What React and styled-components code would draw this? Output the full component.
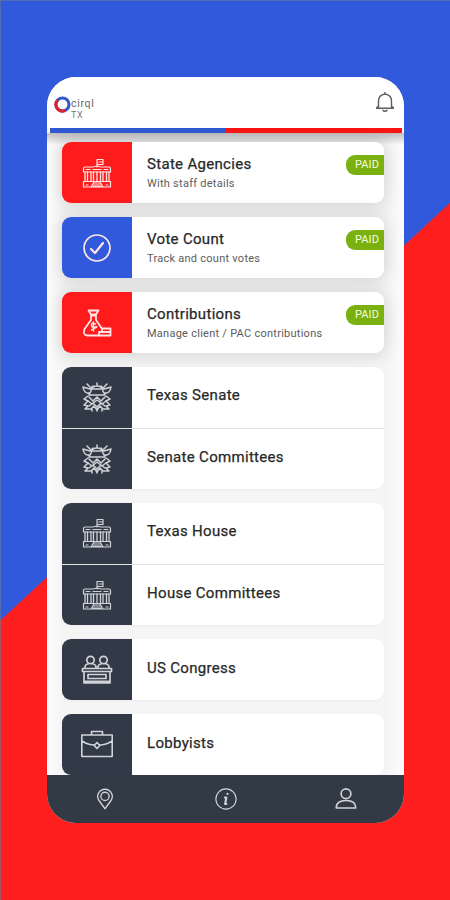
import styled, { createGlobalStyle } from "styled-components";

const GlobalStyle = createGlobalStyle`
  * {
    box-sizing: border-box;
  }

  body {
    margin: 0;
    font-family: Roboto, "Liberation Sans", sans-serif;
  }
`;

const Backdrop = styled.div`
  width: 450px;
  height: 900px;
  padding: 77px 46px 0 47px;
  overflow: hidden;
  background:
    linear-gradient(to bottom right, #3159db 50%, #ff1e1e 50.2%) 0 202px / 450px
      418px no-repeat,
    linear-gradient(#3159db 400px, #ff1e1e 400px);
  box-shadow: inset 1px 1px 0 rgba(110, 120, 150, 0.6);
`;

const Phone = styled.div`
  display: flex;
  flex-direction: column;
  height: 746px;
  border-radius: 29px;
  overflow: hidden;
  background: #f8f8f8;
`;

const Header = styled.header`
  flex: none;
  display: flex;
  justify-content: space-between;
  height: 51px;
  padding: 14px 9px 0 7px;
  background: white;
`;

const Logo = styled.div`
  display: flex;
  padding-top: 5px;
`;

const LogoText = styled.div`
  padding-top: 3px;
  font-size: 10.5px;
  line-height: 10px;
  letter-spacing: 0.7px;
  color: #666;

  span {
    display: block;
    font-size: 9px;
    line-height: 12px;
    color: #777;
  }
`;

const Stripe = styled.div`
  flex: none;
  height: 5px;
  margin: 0 2px 0 3px;
  background: linear-gradient(90deg, #3159cf 176px, #f91414 176px);
`;

const List = styled.main`
  flex: 1;
  min-height: 0;
  overflow: hidden;
  display: flex;
  flex-direction: column;
  gap: 14px;
  padding: 9px 20px 0 15px;
  background:
    linear-gradient(rgba(0, 0, 0, 0.24), rgba(0, 0, 0, 0) 12px),
    linear-gradient(90deg, #fdfdfd, #f5f5f5 15px 340px, #fcfcfc);
`;

const Card = styled.section`
  flex: none;
  border-radius: 9px;
  box-shadow: ${({ $raised }) =>
    $raised
      ? "0 1px 17px 2px rgba(0, 0, 0, 0.13)"
      : "0 1px 3px rgba(0, 0, 0, 0.04)"};
`;

const CardRows = styled.div`
  display: flex;
  flex-direction: column;
  height: ${({ $count }) => $count * 61}px;
  border-radius: 9px;
  overflow: hidden;
  background: white;
`;

const Row = styled.div`
  flex: 1;
  display: flex;

  & + & {
    border-top: 1px solid #e4e4e4;
  }
`;

const IconBox = styled.div`
  width: 70px;
  display: flex;
  align-items: center;
  justify-content: center;
  color: ${({ $color }) => ($color === "#323a47" ? "#d0d3d8" : "#ffe5e5")};
  background: ${({ $color }) => $color};
`;

const Labels = styled.div`
  flex: 1;
  padding: ${({ $single, $alone }) =>
      $single ? ($alone ? "20px" : "19px") : "13px"}
    0 0 15px;
  white-space: nowrap;
`;

const Title = styled.div`
  font-size: 15px;
  line-height: 18px;
  letter-spacing: 0.31px;
  color: #282828;
  -webkit-text-stroke: 0.25px #282828;
`;

const Subtitle = styled.div`
  margin-top: 4px;
  font-size: 11px;
  line-height: 14px;
  letter-spacing: 0.26px;
  color: #5c5c5c;
`;

const Badge = styled.div`
  align-self: flex-start;
  width: 38px;
  height: 20px;
  margin-top: 13px;
  padding-left: 9px;
  border-radius: 9px 0 0 9px;
  font-size: 11px;
  line-height: 20px;
  letter-spacing: 0.1px;
  color: #f3ffe0;
  background: #7ab00f;
`;

const TabBar = styled.nav`
  flex: none;
  display: flex;
  align-items: center;
  justify-content: space-between;
  height: 48px;
  padding: 0 46px 0 46px;
  color: #cfd2d7;
  background: #323a45;
`;

const Icon = ({ size = 32, width = 1.5, children }) => (
  <svg
    width={size}
    height={size}
    viewBox="0 0 32 32"
    fill="none"
    stroke="currentColor"
    strokeWidth={width}
    strokeLinecap="round"
    strokeLinejoin="round"
  >
    {children}
  </svg>
);

const BuildingIcon = () => (
  <Icon width={1.2}>
    <path d="M16 10V2.500h6v5h-6M18 5h4" />
    <path d="M2.500 11.500q0-1.500 1.500-1.500h8l4-1 4 1h8q1.500 0 1.500 1.500V15h-27zM5 12.500h4M12 12.500h8M23 12.500h4" />
    <path
      d="M4 15v9M6.500 15v9M10 15v9M12.500 15v9M16 15v9M19.500 15v9M22 15v9M25.500 15v9M28 15v9"
      strokeWidth="1.300"
    />
    <path d="M2.500 24.500h27V30h-27zM10 30l3-5h6l3 5M13 27h6M12 29h8M5 28h2M25 28h2" />
  </Icon>
);

const CheckIcon = () => (
  <Icon width={1.7}>
    <circle cx="16" cy="16" r="13" />
    <path d="m10 17 4 4 8-10" strokeWidth="2.2" />
  </Icon>
);

const MoneyBagIcon = () => (
  <Icon width={1.8}>
    <path d="M7.500 3.500h10L15 7.500h-5zM10 8.500h5M10 9v4L3.500 22q-2 6.500 3 6.500H18M15 9v4l5.500 8" />
    <path d="M12.500 15v9M14.500 17q-4-2-4 1t4 2-4 3" strokeWidth="1.500" />
    <path d="M21 21.500h8.500v7H18V25h3zM21 25h8" />
  </Icon>
);

const CapitolIcon = () => (
  <Icon width={1.5}>
    <path d="M16 2v3M10 10q1-5 6-5t6 5l2 4H8zM9 12q-6 1-7-6l7 2 3-3M23 12q6 1 7-6l-7 2-3-3M6 3l3 3M26 3l-3 3M12 8h8" />
    <path d="M7 15l-4 3 4 2-4 4 4 1-3 3h6l3-3 3 4 3-4 3 3h6l-3-3 4-1-4-4 4-2-4-3" />
    <path d="M8 16l4 4 4-4 4 4 4-4M7 20l4 3 5-4 5 4 4-3M8 25l4-3 4 4 4-4 4 3M11 28v2M16 27v3M21 28v2" />
  </Icon>
);

const CongressIcon = () => (
  <Icon width={1.7}>
    <circle cx="9.500" cy="6" r="3.700" />
    <circle cx="22.500" cy="6" r="3.700" />
    <path d="M4 14v-1q0-2.500 4-3.500M15 14v-1q0-2.500-4-3.500M17 14v-1q0-2.500 4-3.500M28 14v-1q0-2.500-4-3.500M1.500 14.500h29v3h-29zM3 17.500v11.500h26V17.500M7 20.500h18v4H7zM3 27.300h26" />
  </Icon>
);

const BriefcaseIcon = () => (
  <Icon width={1.6}>
    <path d="M.8 6h30.400v21.500H.8zM10.500 6V2.500h11V6M1 12q6 4 12.500 4M18.500 16q6.500 0 12.500-4" />
    <path d="m16 13.500 2.800 3-2.800 3-2.800-3z" />
  </Icon>
);

const icons = {
  building: BuildingIcon,
  check: CheckIcon,
  money: MoneyBagIcon,
  capitol: CapitolIcon,
  congress: CongressIcon,
  briefcase: BriefcaseIcon,
};

const RED = "#ff1b1b";
const BLUE = "#3159db";
const DARK = "#323a47";

const cards = [
  [
    {
      title: "State Agencies",
      subtitle: "With staff details",
      icon: "building",
      color: RED,
      paid: true,
    },
  ],
  [
    {
      title: "Vote Count",
      subtitle: "Track and count votes",
      icon: "check",
      color: BLUE,
      paid: true,
    },
  ],
  [
    {
      title: "Contributions",
      subtitle: "Manage client / PAC contributions",
      icon: "money",
      color: RED,
      paid: true,
    },
  ],
  [
    { title: "Texas Senate", icon: "capitol", color: DARK },
    { title: "Senate Committees", icon: "capitol", color: DARK },
  ],
  [
    { title: "Texas House", icon: "building", color: DARK },
    { title: "House Committees", icon: "building", color: DARK },
  ],
  [{ title: "US Congress", icon: "congress", color: DARK }],
  [{ title: "Lobbyists", icon: "briefcase", color: DARK }],
];

const MenuRow = ({ title, subtitle, icon, color, paid, alone }) => {
  const RowIcon = icons[icon];

  return (
    <Row>
      <IconBox $color={color}>
        <RowIcon />
      </IconBox>
      <Labels $single={!subtitle} $alone={alone}>
        <Title>{title}</Title>
        {subtitle && <Subtitle>{subtitle}</Subtitle>}
      </Labels>
      {paid && <Badge>PAID</Badge>}
    </Row>
  );
};

const App = () => (
  <>
    <GlobalStyle />
    <Backdrop>
      <Phone>
        <Header>
          <Logo>
            <svg width="17" height="17" viewBox="0 0 17 17" fill="none">
              <circle cx="8.500" cy="8.500" r="6.500" stroke="#3159c8" strokeWidth="3" />
              <path
                d="M3.500 4.300A6.500 6.500 0 0 0 11 14.500"
                stroke="#e3202b"
                strokeWidth="3"
              />
            </svg>
            <LogoText>
              cirql<span>TX</span>
            </LogoText>
          </Logo>
          <svg
            width="20"
            height="22"
            viewBox="0 0 20 22"
            fill="none"
            stroke="#5c6066"
            strokeWidth="1.400"
            strokeLinejoin="round"
          >
            <path d="M1 17.300h18M3.500 17V10q0-6 6.500-7 6.500 1 6.500 7v7M10 3V1M7.500 19q2.500 2.500 5 0M1.500 17l2-2M18.500 17l-2-2" />
          </svg>
        </Header>
        <Stripe />
        <List>
          {cards.map((rows) => (
            <Card key={rows[0].title} $raised={rows[0].paid}>
              <CardRows $count={rows.length}>
                {rows.map((row) => (
                  <MenuRow
                    key={row.title}
                    alone={rows.length === 1}
                    {...row}
                  />
                ))}
              </CardRows>
            </Card>
          ))}
        </List>
        <TabBar>
          <Icon size={24} width={1.8}>
            <path d="M16 29 8 18Q5 13 7 9q3-6 9-6t9 6q2 4-1 9z" />
            <circle cx="16" cy="12.500" r="5.500" />
          </Icon>
          <Icon size={24}>
            <circle cx="16" cy="16" r="13.500" />
            <path d="M18 9v.2M14.500 14h2L14.800 22.500h1.700" strokeWidth="2.800" />
          </Icon>
          <Icon size={24} width={2.2}>
            <circle cx="16" cy="9" r="6.500" />
            <path d="M3 28q0-10 13-10t13 10z" />
          </Icon>
        </TabBar>
      </Phone>
    </Backdrop>
  </>
);

export default App;
